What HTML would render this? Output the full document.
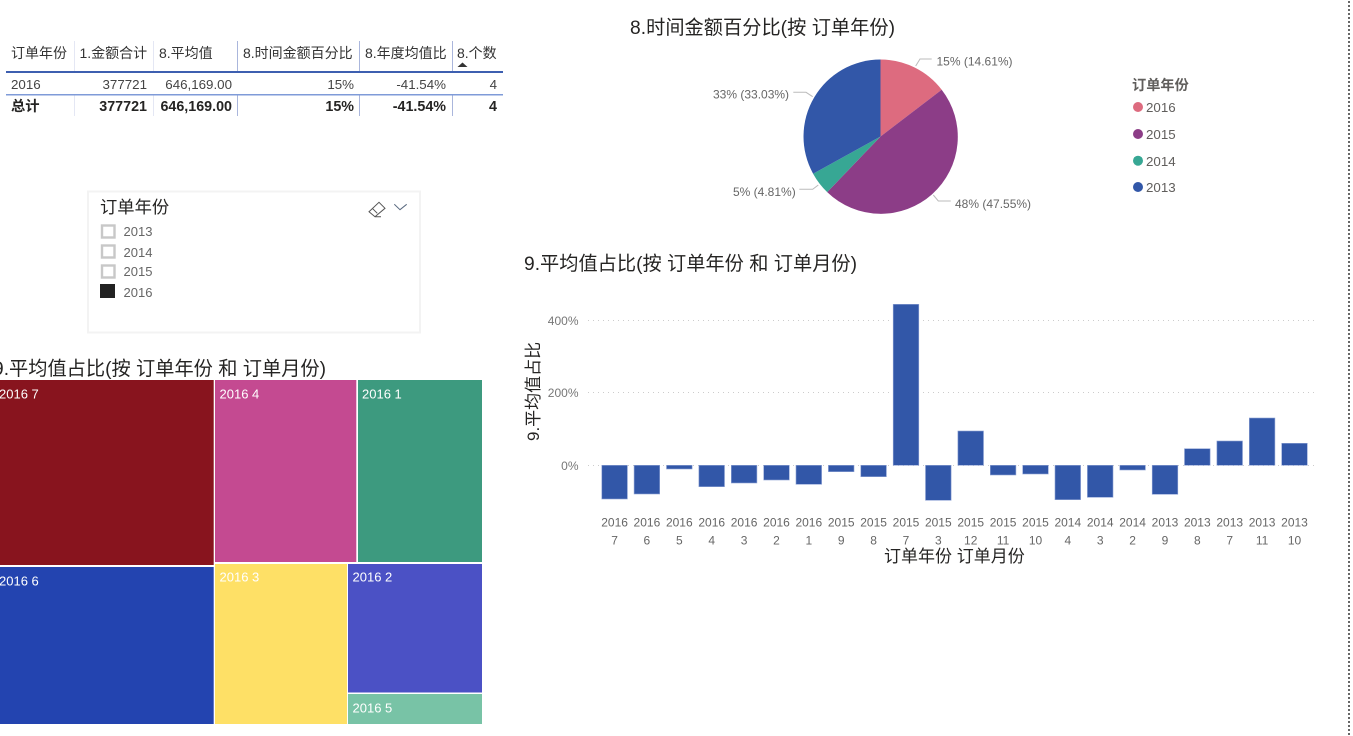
<!DOCTYPE html>
<html><head><meta charset="utf-8">
<style>
html,body{margin:0;padding:0;background:#fff;width:1353px;height:736px;overflow:hidden}
svg{position:absolute;left:0;top:0;font-family:"Liberation Sans","Noto Sans CJK SC",sans-serif}
.dots{position:absolute;left:1348px;top:1px;width:2px;height:735px;background:repeating-linear-gradient(to bottom,#666 0,#666 2px,transparent 2px,transparent 4px)}
.h{font-size:14px;fill:#333}.b{font-size:13.33px;fill:#444}.t{font-size:14.3px;fill:#252423;font-weight:bold}
.e{text-anchor:end}
.ti{font-size:19.2px;fill:#252423}
.sl{font-size:13px;fill:#666}
.pl{font-size:12px;fill:#666}
.lg{font-size:13.33px;fill:#605e5c}
.tk{font-size:12px;fill:#777;text-anchor:end}
.xl{font-size:12px;fill:#666;text-anchor:middle}
.tm{font-size:13px;fill:#fff}
.at{font-size:17px;fill:#252423}
</style></head><body>
<svg width="1353" height="736" viewBox="0 0 1353 736" xmlns="http://www.w3.org/2000/svg">
<!-- table -->
<g stroke="#e4e7f4"><path d="M74.5 41V72M153.5 41V72M74.5 95V116M153.5 95V116"/></g>
<g stroke="#aab6dc"><path d="M237.5 41V72M359.5 41V72M452.5 41V72M237.5 95V116M359.5 95V116M452.5 95V116"/></g>
<rect x="6" y="71" width="497" height="2" fill="#3d5fb0"/>
<rect x="6" y="94" width="497" height="1.5" fill="#7f9bd8"/>
<text class="h" x="11" y="58">订单年份</text>
<text class="h" x="79.5" y="58">1.金额合计</text>
<text class="h" x="159" y="58">8.平均值</text>
<text class="h" x="243" y="58">8.时间金额百分比</text>
<text class="h" x="365" y="58">8.年度均值比</text>
<text class="h" x="457" y="58">8.个数</text>
<path d="M457.5 67L462.5 62.5L467.5 67Z" fill="#333"/>
<text class="b" x="11" y="89">2016</text>
<text class="b e" x="147" y="89">377721</text>
<text class="b e" x="232" y="89">646,169.00</text>
<text class="b e" x="354" y="89">15%</text>
<text class="b e" x="446" y="89">-41.54%</text>
<text class="b e" x="497" y="89">4</text>
<text class="t" x="11" y="111">总计</text>
<text class="t e" x="147" y="111">377721</text>
<text class="t e" x="232" y="111">646,169.00</text>
<text class="t e" x="354" y="111">15%</text>
<text class="t e" x="446" y="111">-41.54%</text>
<text class="t e" x="497" y="111">4</text>

<!-- slicer -->
<rect x="88" y="191.5" width="332" height="141" fill="#fff" stroke="#f3f3f3" stroke-width="2"/>
<text x="100" y="213" font-size="17.3" fill="#252423">订单年份</text>
<path d="M369 211.7L379 202.3L385 208.3L375 216.7Z M372.3 208.3L377.3 213.3 M375 216.7H381" fill="none" stroke="#555" stroke-width="1"/>
<path d="M394.3 204.3L400 209.7L406.7 204.3" fill="none" stroke="#5a6a80" stroke-width="1"/>
<g fill="none" stroke="#c8c8c8" stroke-width="2.4">
<rect x="102" y="225.5" width="12.5" height="12"/>
<rect x="102" y="245.5" width="12.5" height="12"/>
<rect x="102" y="265.5" width="12.5" height="12"/>
</g>
<rect x="100" y="284" width="15" height="14" fill="#222"/>
<text class="sl" x="123.5" y="236">2013</text>
<text class="sl" x="123.5" y="257">2014</text>
<text class="sl" x="123.5" y="276">2015</text>
<text class="sl" x="123.5" y="297">2016</text>

<!-- titles -->
<text class="ti" x="630" y="34" textLength="265">8.时间金额百分比(按 订单年份)</text>
<text class="ti" x="524" y="270" textLength="333">9.平均值占比(按 订单年份 和 订单月份)</text>
<text class="ti" x="-7" y="375" textLength="333">9.平均值占比(按 订单年份 和 订单月份)</text>

<!-- pie -->
<path d="M880.5 136.5V59.5A77 77 0 0 1 941.7 89.7Z" fill="#dd6b7f"/>
<path d="M880.5 136.5L941.7 89.7A77 77 0 0 1 827.2 192.1Z" fill="#8c3d87"/>
<path d="M880.5 136.5L827.2 192.1A77 77 0 0 1 813.1 173.7Z" fill="#37a794"/>
<path d="M880.5 136.5L813.1 173.7A77 77 0 0 1 880.5 59.5Z" fill="#3257a8"/>
<g fill="none" stroke="#bbb" stroke-width="1">
<path d="M931.7 59H920L915.7 66"/>
<path d="M793.3 92.3H806L812.7 96.7"/>
<path d="M799.3 189.3H812.7L818.3 185"/>
<path d="M933.3 195L938.3 201H950.7"/>
</g>
<text class="pl" x="936.5" y="65.5">15% (14.61%)</text>
<text class="pl" x="713" y="98.5">33% (33.03%)</text>
<text class="pl" x="733" y="196">5% (4.81%)</text>
<text class="pl" x="955" y="208">48% (47.55%)</text>
<text x="1132" y="90" font-size="14.2" font-weight="bold" fill="#605e5c">订单年份</text>
<circle cx="1138" cy="107" r="5" fill="#dd6b7f"/><text class="lg" x="1146" y="112">2016</text>
<circle cx="1138" cy="134" r="5" fill="#8c3d87"/><text class="lg" x="1146" y="139">2015</text>
<circle cx="1138" cy="160.7" r="5" fill="#37a794"/><text class="lg" x="1146" y="166">2014</text>
<circle cx="1138" cy="187" r="5" fill="#3257a8"/><text class="lg" x="1146" y="192">2013</text>

<!-- column chart -->
<g stroke="#ccc" stroke-width="1" stroke-dasharray="1 4">
<path d="M588 320.5H1318M588 392.5H1318M588 465.5H1318"/>
</g>
<text class="tk" x="578.5" y="325">400%</text>
<text class="tk" x="578.5" y="397">200%</text>
<text class="tk" x="578.5" y="470">0%</text>
<g fill="#3257a8" stroke="#8ea2d4" stroke-width="0.6">
<rect x="601.8" y="465.3" width="25.6" height="33.7"/>
<rect x="634.1" y="465.3" width="25.6" height="28.7"/>
<rect x="666.5" y="465.3" width="25.6" height="3.7"/>
<rect x="698.9" y="465.3" width="25.6" height="21.4"/>
<rect x="731.3" y="465.3" width="25.6" height="17.7"/>
<rect x="763.7" y="465.3" width="25.6" height="14.7"/>
<rect x="796" y="465.3" width="25.6" height="19"/>
<rect x="828.4" y="465.3" width="25.6" height="6.4"/>
<rect x="860.8" y="465.3" width="25.6" height="11.4"/>
<rect x="893.2" y="304.3" width="25.6" height="161"/>
<rect x="925.5" y="465.3" width="25.6" height="35"/>
<rect x="957.9" y="431" width="25.6" height="34.3"/>
<rect x="990.3" y="465.3" width="25.6" height="9.7"/>
<rect x="1022.7" y="465.3" width="25.6" height="8.7"/>
<rect x="1055" y="465.3" width="25.6" height="34.4"/>
<rect x="1087.4" y="465.3" width="25.6" height="32"/>
<rect x="1119.8" y="465.3" width="25.6" height="4.7"/>
<rect x="1152.2" y="465.3" width="25.6" height="29"/>
<rect x="1184.5" y="448.7" width="25.6" height="16.6"/>
<rect x="1216.9" y="441" width="25.6" height="24.3"/>
<rect x="1249.3" y="418" width="25.6" height="47.3"/>
<rect x="1281.7" y="443.3" width="25.6" height="22"/>
</g>
<g>
<text class="xl" x="614.6" y="526.5">2016</text><text class="xl" x="614.6" y="544.5">7</text>
<text class="xl" x="646.9" y="526.5">2016</text><text class="xl" x="646.9" y="544.5">6</text>
<text class="xl" x="679.3" y="526.5">2016</text><text class="xl" x="679.3" y="544.5">5</text>
<text class="xl" x="711.7" y="526.5">2016</text><text class="xl" x="711.7" y="544.5">4</text>
<text class="xl" x="744.1" y="526.5">2016</text><text class="xl" x="744.1" y="544.5">3</text>
<text class="xl" x="776.5" y="526.5">2016</text><text class="xl" x="776.5" y="544.5">2</text>
<text class="xl" x="808.8" y="526.5">2016</text><text class="xl" x="808.8" y="544.5">1</text>
<text class="xl" x="841.2" y="526.5">2015</text><text class="xl" x="841.2" y="544.5">9</text>
<text class="xl" x="873.6" y="526.5">2015</text><text class="xl" x="873.6" y="544.5">8</text>
<text class="xl" x="906" y="526.5">2015</text><text class="xl" x="906" y="544.5">7</text>
<text class="xl" x="938.3" y="526.5">2015</text><text class="xl" x="938.3" y="544.5">3</text>
<text class="xl" x="970.7" y="526.5">2015</text><text class="xl" x="970.7" y="544.5">12</text>
<text class="xl" x="1003.1" y="526.5">2015</text><text class="xl" x="1003.1" y="544.5">11</text>
<text class="xl" x="1035.5" y="526.5">2015</text><text class="xl" x="1035.5" y="544.5">10</text>
<text class="xl" x="1067.8" y="526.5">2014</text><text class="xl" x="1067.8" y="544.5">4</text>
<text class="xl" x="1100.2" y="526.5">2014</text><text class="xl" x="1100.2" y="544.5">3</text>
<text class="xl" x="1132.6" y="526.5">2014</text><text class="xl" x="1132.6" y="544.5">2</text>
<text class="xl" x="1165" y="526.5">2013</text><text class="xl" x="1165" y="544.5">9</text>
<text class="xl" x="1197.3" y="526.5">2013</text><text class="xl" x="1197.3" y="544.5">8</text>
<text class="xl" x="1229.7" y="526.5">2013</text><text class="xl" x="1229.7" y="544.5">7</text>
<text class="xl" x="1262.1" y="526.5">2013</text><text class="xl" x="1262.1" y="544.5">11</text>
<text class="xl" x="1294.5" y="526.5">2013</text><text class="xl" x="1294.5" y="544.5">10</text>
</g>
<text class="at" x="884" y="562">订单年份 订单月份</text>
<text class="at" transform="translate(539 441) rotate(-90)">9.平均值占比</text>

<!-- treemap -->
<rect x="0" y="380" width="213.7" height="185" fill="#88141e"/>
<rect x="0" y="567" width="213.7" height="157" fill="#2344b0"/>
<rect x="215" y="380" width="141.3" height="182" fill="#c44a91"/>
<rect x="358" y="380" width="124" height="182" fill="#3d9a7f"/>
<rect x="215" y="564" width="132" height="160" fill="#fee066"/>
<rect x="348" y="564" width="134" height="128.5" fill="#4b51c5"/>
<rect x="348" y="694" width="134" height="30" fill="#78c3a6"/>
<text class="tm" x="-1" y="398.5">2016 7</text>
<text class="tm" x="219.5" y="398.5">2016 4</text>
<text class="tm" x="362" y="398.5">2016 1</text>
<text class="tm" x="-1" y="585.5">2016 6</text>
<text class="tm" x="219.5" y="581.5">2016 3</text>
<text class="tm" x="352.5" y="581.5">2016 2</text>
<text class="tm" x="352.5" y="712.5">2016 5</text>
</svg>
<div class="dots"></div>
</body></html>
